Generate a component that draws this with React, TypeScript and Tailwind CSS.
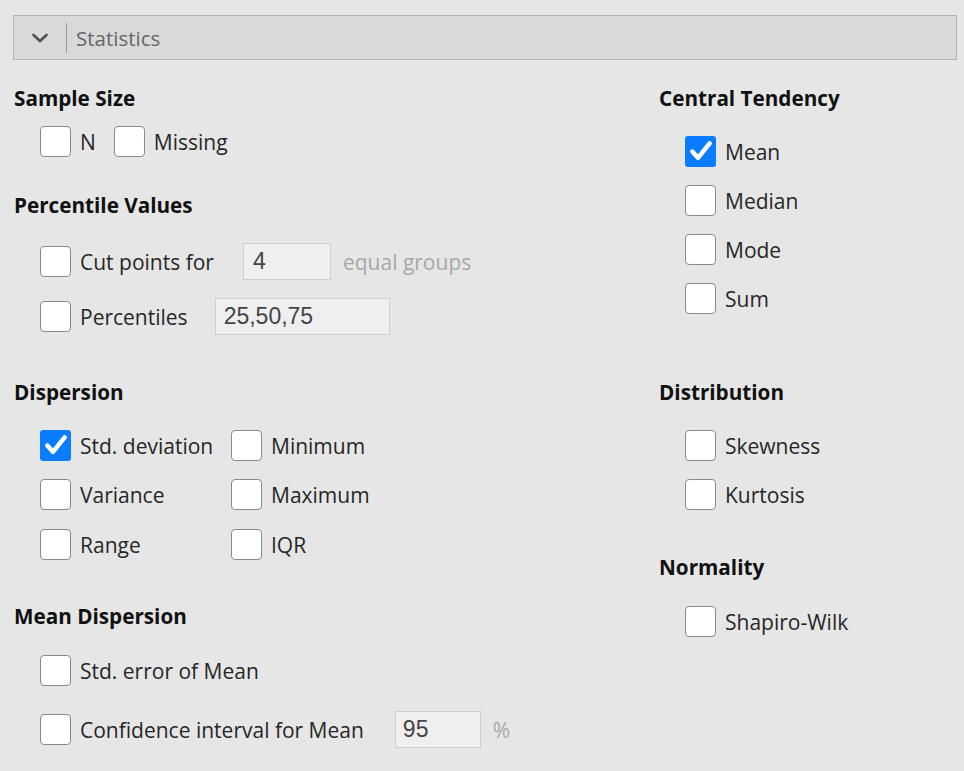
import React from "react";

function Check({ checked = false }: { checked?: boolean }) {
  if (checked) {
    return (
      <span className="flex h-[31px] w-[31px] shrink-0 items-center justify-center rounded-[3px] bg-[#0a7cff]">
        <svg width="26" height="26" viewBox="0 0 24 24" fill="none">
          <path d="M4 12.5l5.2 5.8L20 5" stroke="white" strokeWidth="4.2" strokeLinecap="round" strokeLinejoin="round" />
        </svg>
      </span>
    );
  }
  return <span className="h-[31px] w-[31px] shrink-0 rounded-[4px] border border-[#8a8a8a] bg-white" />;
}

function Option({ label, checked }: { label: string; checked?: boolean }) {
  return (
    <div className="flex h-[30px] items-center gap-[9px]">
      <Check checked={checked} />
      <span className="mt-[3px] text-[21px] text-[#262626]">{label}</span>
    </div>
  );
}

function Heading({ children }: { children: React.ReactNode }) {
  return <div className="h-[28px] text-[20.7px] font-bold leading-[28px] text-[#111]">{children}</div>;
}

function Field({ value, width }: { value: string; width: string }) {
  return (
    <div className={`flex h-[37px] items-center border border-[#cfcfcf] bg-[#efefef] text-[23px] text-[#444] [font-family:'Liberation_Sans',Arial,sans-serif] ${width}`}>
      {value}
    </div>
  );
}

export default function App() {
  return (
    <div className="min-h-[771px] w-[964px] bg-[#e6e6e6] pt-[15px] [font-family:'Open_Sans','Noto_Sans',sans-serif]">
      <div className="mx-[13px] flex h-[45px] w-[944px] items-center border border-[#b3b3b3] bg-[#d9d9d9]">
        <div className="flex w-[52px] items-center justify-center">
          <svg width="18" height="12" viewBox="0 0 18 12" fill="none">
            <path d="M2.5 3L9 9l6.5-6" stroke="#555" strokeWidth="2.8" strokeLinecap="round" strokeLinejoin="round" />
          </svg>
        </div>
        <div className="h-[30px] w-px bg-[#999]" />
        <span className="mt-[2px] pl-[9px] text-[20.5px] text-[#666]">Statistics</span>
      </div>

      <div className="flex pl-[14px]">
        <div className="flex w-[645px] flex-col">
          <div className="mt-[24px]"><Heading>Sample Size</Heading></div>
          <div className="ml-[26px] mt-[14px] flex gap-[18px]">
            <Option label="N" />
            <Option label="Missing" />
          </div>

          <div className="mt-[35px]"><Heading>Percentile Values</Heading></div>
          <div className="ml-[26px] mt-[24px] flex h-[37px] items-center">
            <Option label="Cut points for" />
            <div className="ml-[29px]"><Field value="4" width="w-[88px] pl-[9px]" /></div>
            <span className="ml-[12px] mt-[3px] text-[21px] text-[#a8a8a8]">equal groups</span>
          </div>
          <div className="ml-[26px] mt-[18px] flex h-[37px] items-center">
            <Option label="Percentiles" />
            <div className="ml-[27px]"><Field value="25,50,75" width="w-[175px] pl-[8px]" /></div>
          </div>

          <div className="mt-[43px]"><Heading>Dispersion</Heading></div>
          <div className="ml-[26px] mt-[24px] grid w-[360px] grid-cols-[191px_1fr] gap-y-[19.5px]">
            <Option label="Std. deviation" checked />
            <Option label="Minimum" />
            <Option label="Variance" />
            <Option label="Maximum" />
            <Option label="Range" />
            <Option label="IQR" />
          </div>

          <div className="mt-[43px]"><Heading>Mean Dispersion</Heading></div>
          <div className="ml-[26px] mt-[25px]">
            <Option label="Std. error of Mean" />
          </div>
          <div className="ml-[26px] mt-[26px] flex h-[37px] items-center">
            <Option label="Confidence interval for Mean" />
            <div className="ml-[31px]"><Field value="95" width="w-[86px] pl-[7px]" /></div>
            <span className="ml-[12px] mt-[3px] text-[21px] text-[#a8a8a8]">%</span>
          </div>
        </div>

        <div className="flex flex-col">
          <div className="mt-[24px]"><Heading>Central Tendency</Heading></div>
          <div className="ml-[26px] mt-[24px] flex flex-col gap-[19px]">
            <Option label="Mean" checked />
            <Option label="Median" />
            <Option label="Mode" />
            <Option label="Sum" />
          </div>

          <div className="mt-[65px]"><Heading>Distribution</Heading></div>
          <div className="ml-[26px] mt-[24px] flex flex-col gap-[19px]">
            <Option label="Skewness" />
            <Option label="Kurtosis" />
          </div>

          <div className="mt-[44px]"><Heading>Normality</Heading></div>
          <div className="ml-[26px] mt-[25px]">
            <Option label="Shapiro-Wilk" />
          </div>
        </div>
      </div>
    </div>
  );
}
